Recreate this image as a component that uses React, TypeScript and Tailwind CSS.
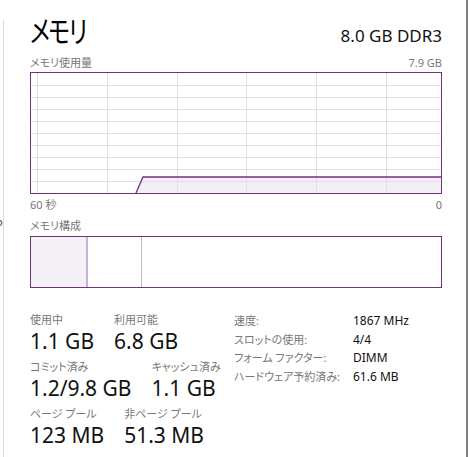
import React from "react";

const FONT = "font-['Noto_Sans','Noto_Sans_CJK_JP',sans-serif] [font-feature-settings:'palt']";

// ── Usage graph ───────────────────────────────────────────────────────────────

function UsageGraph() {
  const vLines = [6, 76, 146, 215, 285, 355];
  const hLines = [12, 24, 36, 48, 60, 72, 84, 96, 108];
  return (
    <div className="h-[122px] border border-[#742f80] bg-white">
      <svg width="410" height="120" viewBox="0 0 410 120" className="block">
        <polygon points="105,120 112,104 410,104 410,120" fill="#f3eff6" />
        {vLines.map((x) => (
          <line key={x} x1={x + 0.5} y1="0" x2={x + 0.5} y2="120" stroke="#e6dce9" strokeWidth="1" />
        ))}
        {hLines.map((y) => (
          <line key={y} x1="0" y1={y + 0.5} x2="410" y2={y + 0.5} stroke="#e6dce9" strokeWidth="1" />
        ))}
        <polyline points="105,120 112,104 410,104" fill="none" stroke="#742f80" strokeWidth="1.3" />
      </svg>
    </div>
  );
}

// ── Composition bar ───────────────────────────────────────────────────────────

function CompositionBar() {
  return (
    <div className="flex h-[52px] border border-[#742f80] bg-white">
      <div className="w-[57px] bg-[#f3f0f6] border-r-2 border-[#c9b1d1]" />
      <div className="w-[54px] border-r border-[#c9b1d1]" />
      <div className="flex-1" />
    </div>
  );
}

// ── Stats ─────────────────────────────────────────────────────────────────────

function Stat({ label, value }: { label: string; value: string }) {
  return (
    <div className="flex flex-col">
      <span className="text-[11px] leading-[16px] text-[#777]">{label}</span>
      <span className="text-[21px] leading-[26px] text-[#111]">{value}</span>
    </div>
  );
}

const details: [string, string][] = [
  ["速度:", "1867 MHz"],
  ["スロットの使用:", "4/4"],
  ["フォーム ファクター:", "DIMM"],
  ["ハードウェア予約済み:", "61.6 MB"],
];

export default function App() {
  return (
    <div className={`flex w-[468px] h-[457px] bg-white overflow-hidden ${FONT}`}>
      {/* cut-off neighbour pane */}
      <div className="w-[3px] overflow-hidden">
        <div className="mt-[214px] ml-[-4px] text-[11px] leading-[16px] text-[#333]">o</div>
      </div>
      <div className="mt-[20px] w-px bg-[#dcdcdc]" />

      {/* Main pane */}
      <div className="flex-1 pl-[26px] pr-[24px]">
        <div className="flex justify-between items-baseline h-[50px] pt-[12px]">
          <span className="inline-block origin-left scale-x-[0.76] text-[30px] leading-[38px] text-black tracking-[-2px]">
            メモリ
          </span>
          <span className="text-[17px] leading-[24px] text-[#111]">8.0 GB DDR3</span>
        </div>

        <div className="flex justify-between mt-[5px] h-[17px] text-[11px] leading-[16px] text-[#777]">
          <span>メモリ使用量</span>
          <span>7.9 GB</span>
        </div>

        <UsageGraph />

        <div className="flex justify-between mt-[3px] h-[17px] text-[11px] leading-[16px] text-[#777]">
          <span>60 秒</span>
          <span>0</span>
        </div>

        <div className="mt-[4px] h-[18px] text-[11px] leading-[16px] text-[#777]">メモリ構成</div>

        <CompositionBar />

        <div className="flex items-start mt-[24px]">
          <div className="w-[204px] flex flex-col gap-[5px]">
            <div className="flex gap-[20px]">
              <Stat label="使用中" value="1.1 GB" />
              <Stat label="利用可能" value="6.8 GB" />
            </div>
            <div className="flex gap-[20px]">
              <Stat label="コミット済み" value="1.2/9.8 GB" />
              <Stat label="キャッシュ済み" value="1.1 GB" />
            </div>
            <div className="flex gap-[20px]">
              <Stat label="ページ プール" value="123 MB" />
              <Stat label="非ページ プール" value="51.3 MB" />
            </div>
          </div>
          <div className="grid grid-cols-[119px_auto] content-start leading-[18.5px]">
            {details.map(([k, v]) => (
              <React.Fragment key={k}>
                <span className="text-[11px] text-[#777] whitespace-nowrap">{k}</span>
                <span className="text-[12px] text-[#111]">{v}</span>
              </React.Fragment>
            ))}
          </div>
        </div>
      </div>

      <div className="w-[2px] bg-[#7f7f7f]" />
    </div>
  );
}
